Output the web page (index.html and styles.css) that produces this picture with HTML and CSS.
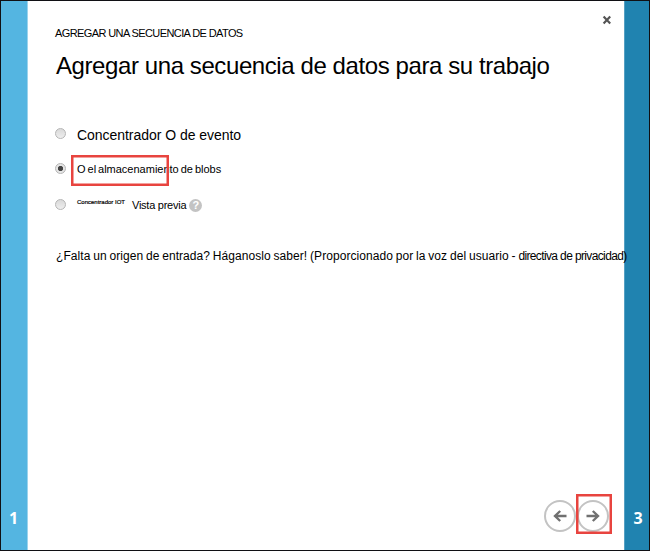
FILE: index.html
```html
<!DOCTYPE html>
<html lang="es">
<head>
<meta charset="utf-8">
<title>Agregar una secuencia de datos</title>
<link rel="stylesheet" href="styles.css">
</head>
<body>
<div class="wizard">
  <aside class="step step-prev">1</aside>
  <main class="panel">
    <button class="close" aria-label="Cerrar"><svg width="10" height="10" viewBox="0 0 10 10"><path d="M1.6 1.6 8.2 8.4M8.2 1.6 1.6 8.4"/></svg></button>
    <div class="eyebrow">AGREGAR UNA SECUENCIA DE DATOS</div>
    <h1 class="title">Agregar una secuencia de datos para su trabajo</h1>
    <div class="options">
      <label class="option"><span class="radio"></span><span class="label-hub">Concentrador O de evento</span></label>
      <label class="option option-blob"><span class="radio checked"></span><span class="label-blob">O el almacenamiento de blobs</span><span class="highlight highlight-blob"></span></label>
      <label class="option"><span class="radio"></span><span class="label-iot">Concentrador IOT</span><span class="preview">Vista previa</span><span class="help">?</span></label>
    </div>
    <p class="note"><span class="note-main">¿Falta un origen de entrada? Háganoslo saber! (Proporcionado por la voz del usuario - </span><span class="note-link">directiva de privacidad)</span></p>
    <nav class="nav">
      <button class="round" aria-label="Anterior"><svg width="16" height="14" viewBox="0 0 16 14"><path d="M14.5 7H3M8.2 2 3 7l5.2 5"/></svg></button>
      <button class="round" aria-label="Siguiente"><svg width="16" height="14" viewBox="0 0 16 14"><path d="M1.5 7H13M7.8 2 13 7l-5.2 5"/></svg><span class="highlight highlight-next"></span></button>
    </nav>
  </main>
  <aside class="step step-next">3</aside>
</div>
</body>
</html>
```
FILE: styles.css
```css
* { box-sizing: border-box; }
body { margin: 0; font-family: "Liberation Sans", Arial, sans-serif; color: #000; background: #fff; }
.wizard { display: flex; width: 650px; height: 551px; border: 1px solid #101014; overflow: hidden; }
.step { display: flex; align-items: flex-end; justify-content: center; color: #fff; font: bold 16px/20px "Open Sans", sans-serif; padding-bottom: 22px; }
.step-prev { width: 27px; background: #54b5e1; border-right: 1px solid #9bd3ec; padding-right: 1px; }
.step-next { width: 25px; background: #2083b0; border-left: 1px solid #55a0c3; padding-left: 2px; }
.panel { position: relative; flex: 1; min-width: 0; padding: 25px 0 0 27px; display: flex; flex-direction: column; }
button { padding: 0; background: none; border: 0; }
svg { display: block; fill: none; stroke: #707070; }
.close { position: absolute; top: 14px; right: 12px; }
.close svg { stroke-width: 2.2; stroke: #555; }
.eyebrow { font-size: 11px; line-height: 14px; letter-spacing: -0.6px; white-space: nowrap; }
.title { margin: 11px 0 0 1px; font-size: 24px; font-weight: 400; line-height: 30px; white-space: nowrap; letter-spacing: -0.41px; }
.options { display: grid; grid-template-rows: 36px 35px 36px; margin-top: 34px; }
.option { display: flex; align-items: center; position: relative; white-space: nowrap; }
.radio { width: 11px; height: 11px; margin: 0 11px 0 0; border: 1px solid #b5b5b5; border-radius: 50%; background: linear-gradient(#d9d9d9, #eee); }
.radio.checked { background: radial-gradient(circle, #444 0 2.2px, #e5e5e5 3px); }
.label-hub { font-size: 14px; margin-top: 4px; letter-spacing: -0.04px; }
.label-blob { font-size: 11px; letter-spacing: 0; word-spacing: -1.1px; }
.label-iot { font-size: 6px; margin-top: -5px; width: 55px; -webkit-text-stroke: 0.2px #000; }
.preview { font-size: 11px; margin-top: 2px; letter-spacing: -0.25px; }
.help { width: 13px; height: 13px; margin: 2px 0 0 3px; border-radius: 50%; background: #c3c3c3; color: #fff; font-size: 11px; line-height: 13px; font-weight: bold; text-align: center; }
.highlight { position: absolute; border: 2.5px solid #e8443f; }
.highlight-blob { left: 16px; top: 4px; width: 98px; height: 31px; }
.highlight-blob, .highlight-next { box-shadow: inset 0 0 0 0.5px #e8443f; }
.note { margin: 26px 0 0 1px; font-size: 12px; line-height: 16px; white-space: nowrap; position: relative; z-index: 1; }
.note-main { letter-spacing: 0.06px; word-spacing: -0.6px; }
.note-link { letter-spacing: -0.63px; }
.nav { display: flex; gap: 1px; margin: auto 15px 18px auto; }
.round { position: relative; display: flex; align-items: center; justify-content: center; width: 32px; height: 32px; border: 2px solid #c3c3c3; border-radius: 50%; }
.round svg { stroke-width: 2.4; }
.highlight-next { left: -3px; top: -8px; width: 36px; height: 40px; }
```
